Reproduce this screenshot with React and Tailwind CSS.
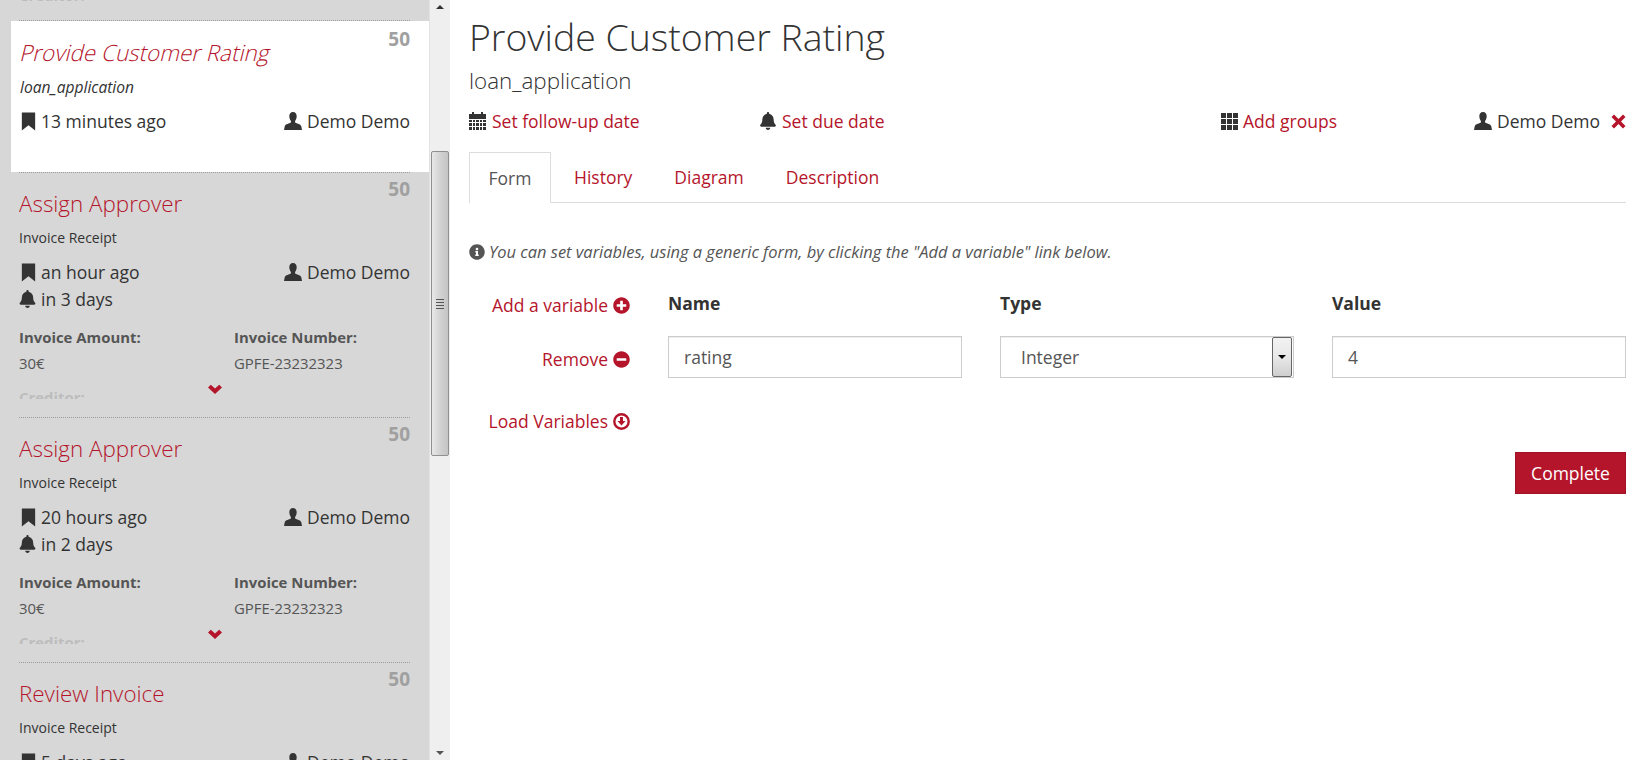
import React from 'react';
import { FaBell, FaPlusCircle, FaMinusCircle, FaInfoCircle } from 'react-icons/fa';

const font = { fontFamily: '"Open Sans", sans-serif' };

const UserIcon = ({ className }) => (
  <svg viewBox="0 0 20 20" className={className} fill="currentColor">
    <path d="M10 0c-2.7 0-4.1 2-4.1 4.8 0 2 .7 3.9 1.8 5.1v1.9c-1.7 1.1-6.1 1.9-6.9 3.9L0 20h20l-.8-4.3c-.8-2-5.2-2.8-6.9-3.9V9.9c1.1-1.2 1.8-3.1 1.8-5.1C14.1 2 12.7 0 10 0z" />
  </svg>
);

const BookmarkIcon = ({ className }) => (
  <svg viewBox="0 0 15 20" className={className} fill="currentColor">
    <path d="M0.5 0.5h14v19l-7-5.5-7 5.5z" />
  </svg>
);

const ChevronIcon = ({ className }) => (
  <svg viewBox="0 0 14 10" className={className} fill="currentColor">
    <path d="M0 3.5 2.8.7 7 4.6 11.2.7 14 3.5 7 10z" />
  </svg>
);

const RemoveIcon = ({ className }) => (
  <svg viewBox="0 0 15 15" className={className} fill="currentColor">
    <path d="M3 .5 7.5 5 12 .5 14.5 3 10 7.5 14.5 12 12 14.5 7.5 10 3 14.5.5 12 5 7.5.5 3z" />
  </svg>
);

const GridIcon = ({ className }) => (
  <svg viewBox="0 0 17 17" className={className} fill="currentColor">
    <path d="M0 0h5v5H0zM6 0h5v5H6zM12 0h5v5h-5zM0 6h5v5H0zM6 6h5v5H6zM12 6h5v5h-5zM0 12h5v5H0zM6 12h5v5H6zM12 12h5v5h-5z" />
  </svg>
);

const CalendarIcon = ({ className }) => (
  <svg viewBox="0 0 17 18" className={className} fill="currentColor">
    <path d="M3 0h2v2h7V0h2v2h3v5H0V2h3z" />
    <path d="M0 8h3v2H0zM4 8h2v2H4zM7 8h3v2H7zM11 8h2v2h-2zM14 8h3v2h-3zM0 11h3v3H0zM4 11h2v3H4zM7 11h3v3H7zM11 11h2v3h-2zM14 11h3v3h-3zM0 15h3v3H0zM4 15h2v3H4zM7 15h3v3H7zM11 15h2v3h-2zM14 15h3v3h-3z" />
  </svg>
);

const LoadIcon = ({ className }) => (
  <svg viewBox="0 0 17 17" className={className}>
    <circle cx="8.5" cy="8.5" r="7.2" fill="none" stroke="currentColor" strokeWidth="2.4" />
    <path d="M7 4h3v4h2.5l-4 4.5-4-4.5H7z" fill="currentColor" />
  </svg>
);

const tasks = [
  { title: 'Assign Approver', created: 'an hour ago', due: 'in 3 days' },
  { title: 'Assign Approver', created: '20 hours ago', due: 'in 2 days' },
];

function TaskMeta({ created }) {
  return (
    <div className="flex justify-between items-center h-[28px] text-[17.5px] text-[#333]">
      <span className="flex items-center gap-[5px]">
        <BookmarkIcon className="w-[15px] h-[19px] ml-[2px]" />
        {created}
      </span>
      <span className="flex items-center gap-[5px]">
        <UserIcon className="w-[18px] h-[18px]" />
        Demo Demo
      </span>
    </div>
  );
}

function TaskItem({ title, created, due }) {
  return (
    <div className="relative h-[245px] ml-[19px] mr-[19px] border-t border-dotted border-[#999] overflow-hidden">
      <span className="absolute right-0 top-[4px] text-[19px] font-bold leading-[24px] text-[#a0a0a0]">50</span>
      <h3 className="pt-[14px] text-[22.4px] font-light leading-[34px] text-[#b5152b]">{title}</h3>
      <div className="mt-[7px] text-[14px] leading-[20px] text-[#333]">Invoice Receipt</div>
      <div className="mt-[10px]">
        <TaskMeta created={created} />
        <div className="flex items-center gap-[5px] h-[26px] text-[17.5px] text-[#333]">
          <FaBell className="w-[17px] h-[18px]" />
          {due}
        </div>
      </div>
      <div className="grid grid-cols-[215px_1fr] mt-[15px] text-[14.9px] text-[#555]">
        <div className="font-bold leading-[20px]">Invoice Amount:</div>
        <div className="font-bold leading-[20px]">Invoice Number:</div>
        <div className="mt-[6px] leading-[20px]">30€</div>
        <div className="mt-[6px] leading-[20px]">GPFE-23232323</div>
      </div>
      <div className="relative h-[20px] mt-[6px] overflow-hidden">
        <div className="pt-[8px] text-[14.9px] font-bold leading-[20px] text-[#555] opacity-20">Creditor:</div>
        <ChevronIcon className="absolute left-[189px] top-[5px] w-[14px] h-[10px] text-[#b5152b]" />
      </div>
    </div>
  );
}

function SideScrollbar() {
  return (
    <div className="flex flex-col justify-between w-[21px] bg-[#efefef] border-l border-[#e2e2e2] shrink-0 relative">
      <div className="flex justify-center pt-[5px]">
        <div className="w-0 h-0 border-x-[4px] border-x-transparent border-b-[4px] border-b-[#333]" />
      </div>
      <div className="absolute left-[1px] top-[151px] w-[18px] h-[305px] rounded-[2px] border border-[#8f8f8f] bg-gradient-to-r from-[#e8e8e8] via-[#d2d2d2] to-[#c4c4c4] flex flex-col items-center justify-center gap-[2px]">
        <div className="w-[8px] h-px bg-[#555]" />
        <div className="w-[8px] h-px bg-[#555]" />
        <div className="w-[8px] h-px bg-[#555]" />
        <div className="w-[8px] h-px bg-[#555]" />
      </div>
      <div className="flex justify-center pb-[5px]">
        <div className="w-0 h-0 border-x-[4px] border-x-transparent border-t-[4px] border-t-[#555]" />
      </div>
    </div>
  );
}

function Sidebar() {
  return (
    <div className="flex h-[760px] shrink-0">
      <div className="w-[429px] h-[760px] bg-[#d7d7d7] overflow-hidden">
        <div className="h-[21px] ml-[19px] overflow-hidden">
          <div className="-mt-[15px] text-[14.9px] font-bold leading-[20px] text-[#555] opacity-20">Creditor:</div>
        </div>
        <div className="relative h-[151px] ml-[11px] bg-white">
          <div className="absolute -top-px left-[8px] right-[19px] border-t border-dotted border-[#999]" />
          <span className="absolute right-[19px] top-[6px] text-[19px] font-bold leading-[24px] text-[#a0a0a0]">50</span>
          <div className="pl-[9px] pr-[19px]">
            <h3 className="pt-[15px] text-[22.4px] font-light leading-[34px] text-[#b5152b]">
              <span className="inline-block ml-[1px] -skew-x-[14deg]">Provide Customer Rating</span>
            </h3>
            <div className="mt-[7px] text-[15.6px] italic leading-[20px] text-[#333]">loan_application</div>
            <div className="mt-[10px] -ml-[1px]">
              <TaskMeta created="13 minutes ago" />
            </div>
          </div>
        </div>
        {tasks.map((t, i) => (
          <TaskItem key={i} {...t} />
        ))}
        <div className="relative ml-[19px] mr-[19px] border-t border-dotted border-[#999]">
          <span className="absolute right-0 top-[4px] text-[19px] font-bold leading-[24px] text-[#a0a0a0]">50</span>
          <h3 className="pt-[14px] text-[22.4px] font-light leading-[34px] text-[#b5152b]">Review Invoice</h3>
          <div className="mt-[7px] text-[14px] leading-[20px] text-[#333]">Invoice Receipt</div>
          <div className="mt-[10px]">
            <TaskMeta created="5 days ago" />
          </div>
        </div>
      </div>
      <SideScrollbar />
    </div>
  );
}

function ActionLink({ icon, children }) {
  return (
    <span className="flex items-center gap-[6px] text-[17.5px] text-[#b5152b]">
      <span className="text-[#333]">{icon}</span>
      {children}
    </span>
  );
}

function VarLink({ label, icon, className }) {
  return (
    <div className={`flex items-center justify-end gap-[5px] text-[17.5px] text-[#b5152b] ${className}`}>
      {label}
      {icon}
    </div>
  );
}

const inputCls = 'h-[42px] border border-[#ccc] bg-white text-[17.5px] text-[#555] shadow-[inset_0_1px_1px_rgba(0,0,0,0.075)] outline-none';

function Main() {
  return (
    <div className="flex-1 pl-[19px] pr-[6px] min-w-0">
      <h1 className="pt-[13px] text-[37.4px] font-light leading-[48px] text-[#333]">Provide Customer Rating</h1>
      <div className="mt-[5px] text-[22.4px] font-light leading-[30px] text-[#333]">loan_application</div>
      <div className="flex items-center h-[28px] mt-[11px]">
        <div className="w-[291px]">
          <ActionLink icon={<CalendarIcon className="w-[17px] h-[18px]" />}>Set follow-up date</ActionLink>
        </div>
        <div className="w-[461px]">
          <ActionLink icon={<FaBell className="w-[16px] h-[18px]" />}>Set due date</ActionLink>
        </div>
        <div className="flex-1">
          <ActionLink icon={<GridIcon className="w-[17px] h-[17px] -mr-[1px]" />}>Add groups</ActionLink>
        </div>
        <div className="flex items-center gap-[5px] text-[17.5px] text-[#333]">
          <UserIcon className="w-[18px] h-[18px]" />
          Demo Demo
          <RemoveIcon className="ml-[6px] w-[15px] h-[15px] text-[#b5152b]" />
        </div>
      </div>

      <div className="flex mt-[17px] h-[51px] border-b border-[#ddd] text-[17.5px] text-[#b5152b]">
        <div className="h-[51px] w-[82px] flex items-center justify-center border border-b-0 border-[#ddd] bg-white text-[#555]">Form</div>
        <div className="h-[50px] flex items-center ml-[23px]">History</div>
        <div className="h-[50px] flex items-center ml-[42px]">Diagram</div>
        <div className="h-[50px] flex items-center ml-[42px]">Description</div>
      </div>

      <div className="flex items-center gap-[4px] mt-[38px] h-[22px] text-[16.45px] italic text-[#555]">
        <FaInfoCircle className="w-[16px] h-[16px]" />
        You can set variables, using a generic form, by clicking the "Add a variable" link below.
      </div>

      <div className="grid grid-cols-[161px_294px_294px_294px] gap-x-[38px] items-center mt-[29px]">
        <VarLink label="Add a variable" icon={<FaPlusCircle className="w-[17px] h-[17px]" />} className="h-[26px]" />
        <div className="font-bold text-[17.5px] text-[#333] h-[26px] leading-[22px]">Name</div>
        <div className="font-bold text-[17.5px] text-[#333] h-[26px] leading-[22px]">Type</div>
        <div className="font-bold text-[17.5px] text-[#333] h-[26px] leading-[22px]">Value</div>

        <VarLink label="Remove" icon={<FaMinusCircle className="w-[17px] h-[17px]" />} className="mt-[18px] h-[42px] pt-[4px]" />
        <input readOnly value="rating" className={`${inputCls} w-[294px] mt-[18px] px-[15px]`} style={font} />
        <div className={`${inputCls} w-[294px] mt-[18px] flex items-center justify-between pl-[20px] pt-[1px]`}>
          <span>Integer</span>
          <div className="flex flex-col items-center justify-center w-[20px] h-[40px] mr-[1px] -mt-[1px] rounded-[2px] border border-[#666] bg-gradient-to-b from-[#f2f2f2] via-[#e8e8e8] to-[#cfcfcf]">
            <div className="w-0 h-0 border-x-[4px] border-x-transparent border-t-[4px] border-t-black" />
          </div>
        </div>
        <input readOnly value="4" className={`${inputCls} w-[294px] mt-[18px] px-[15px]`} style={font} />

        <VarLink label="Load Variables" icon={<LoadIcon className="w-[17px] h-[17px]" />} className="mt-[30px] h-[26px]" />
      </div>

      <div className="flex justify-end mt-[18px]">
        <button className="w-[111px] h-[42px] bg-[#b5152b] border border-[#a01226] text-white text-[17.5px]">Complete</button>
      </div>
    </div>
  );
}

export default function App() {
  return (
    <div className="flex h-[760px] overflow-hidden bg-white" style={font}>
      <Sidebar />
      <Main />
    </div>
  );
}
